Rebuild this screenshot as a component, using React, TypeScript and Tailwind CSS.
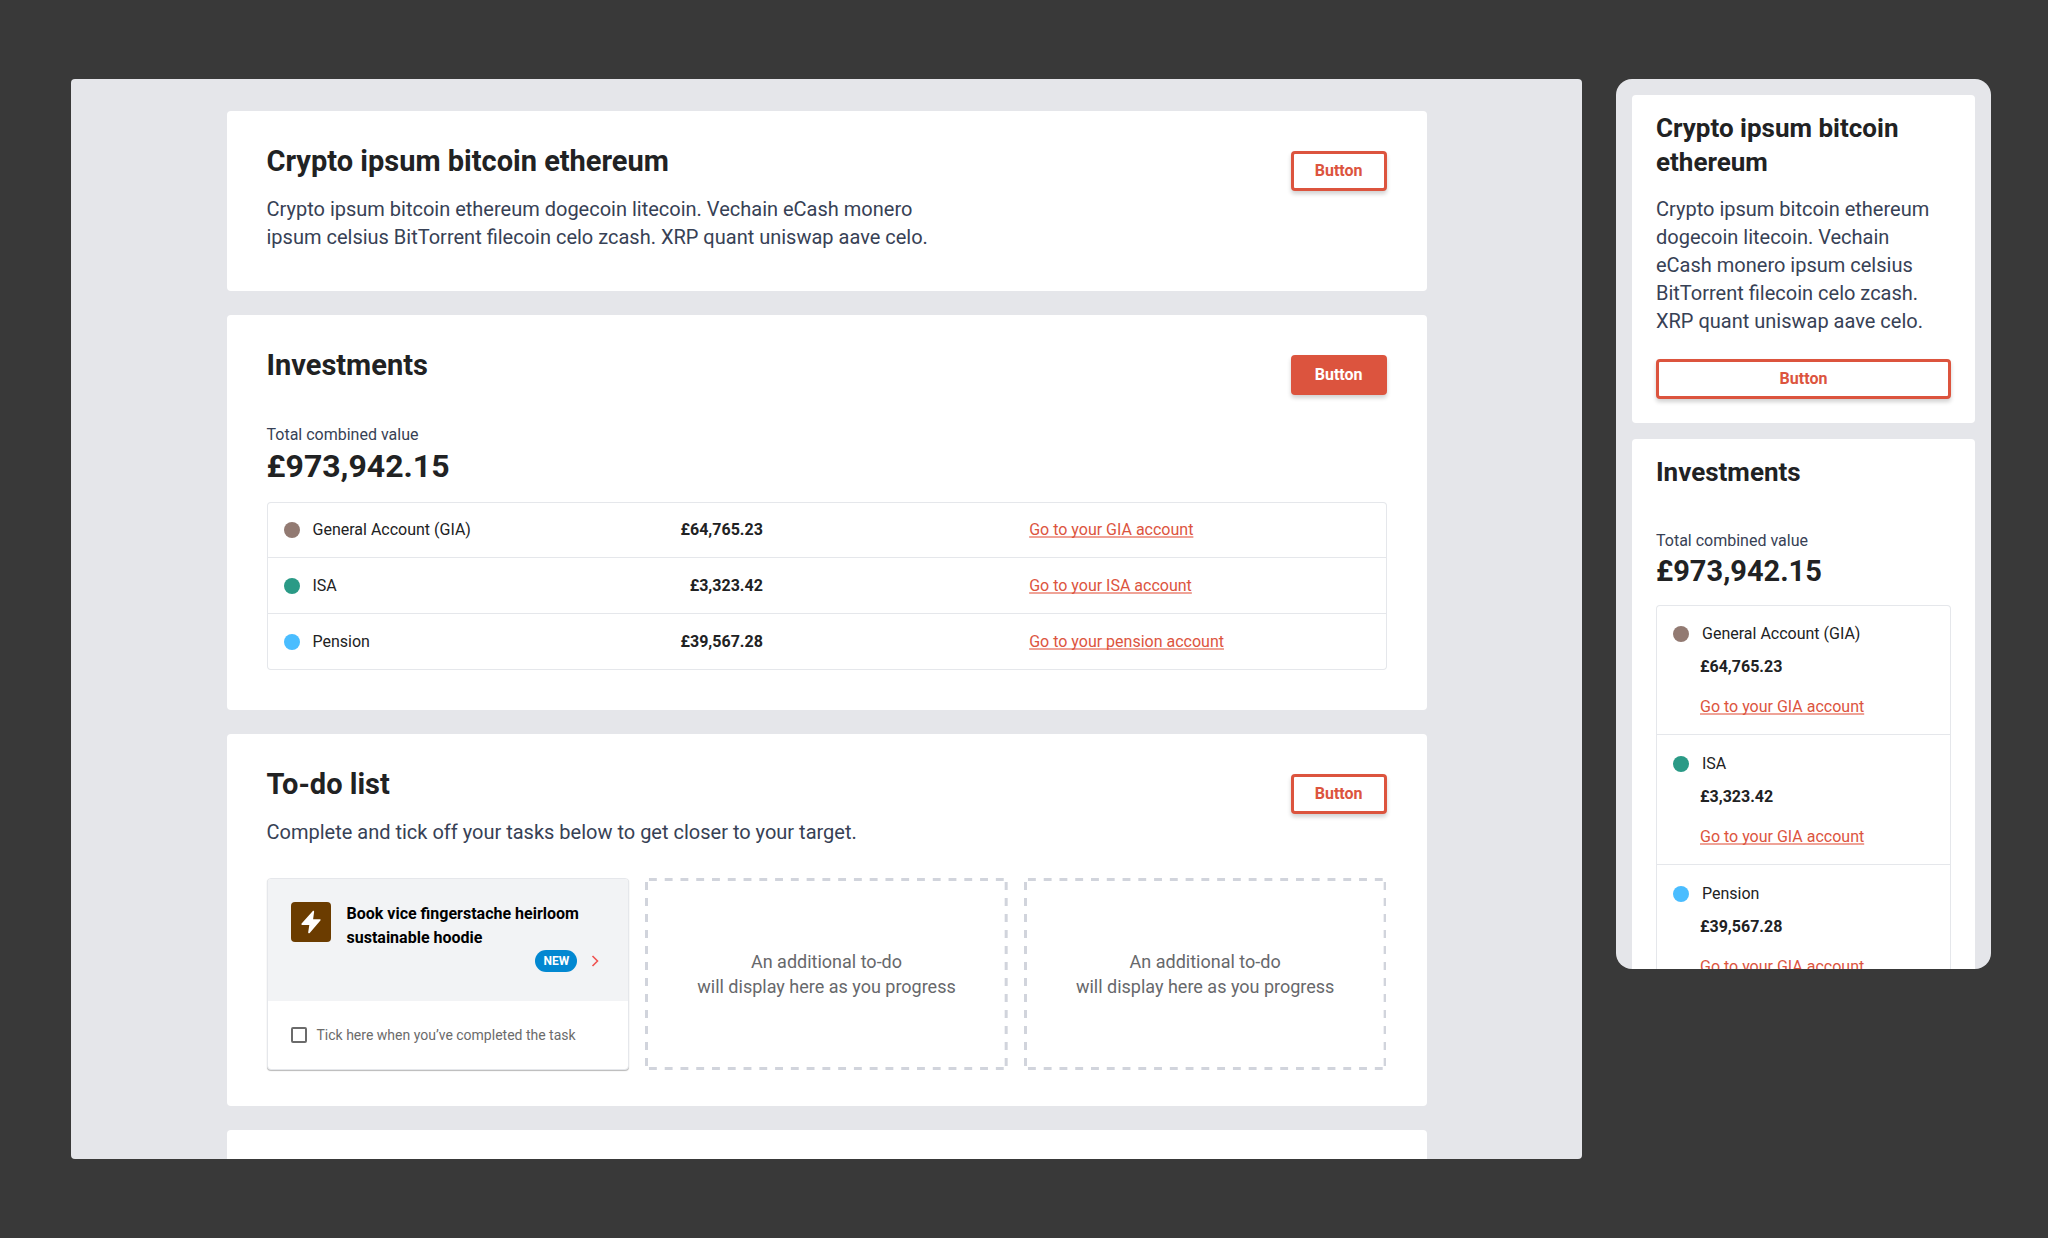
import { useId, useState } from "react";
import type { ReactNode } from "react";
import clsx from "clsx";

type Account = {
  name: string;
  amount: string;
  dot: string;
  link: string;
};

const accounts: Account[] = [
  { name: "General Account (GIA)", amount: "£64,765.23", dot: "bg-[#927a72]", link: "Go to your GIA account" },
  { name: "ISA", amount: "£3,323.42", dot: "bg-[#2a9a86]", link: "Go to your ISA account" },
  { name: "Pension", amount: "£39,567.28", dot: "bg-[#4abdff]", link: "Go to your pension account" },
];

const intro =
  "Crypto ipsum bitcoin ethereum dogecoin litecoin. Vechain eCash monero ipsum celsius BitTorrent filecoin celo zcash. XRP quant uniswap aave celo.";

function Button({ children, filled, wide }: { children: ReactNode; filled?: boolean; wide?: boolean }) {
  return (
    <button
      type="button"
      className={clsx(
        "h-10 shrink-0 rounded border-3 border-[#dc543e] px-[21px] text-base font-bold shadow-[0_3px_4px_rgba(0,0,0,0.18)]",
        filled ? "bg-[#dc543e] text-white" : "bg-white text-[#dc543e]",
        wide && "w-full",
      )}
    >
      {children}
    </button>
  );
}

function Dot({ color }: { color: string }) {
  return <span className={clsx("size-4 shrink-0 rounded-full", color)} />;
}

function AccountLink({ children }: { children: ReactNode }) {
  return (
    <a
      href="#"
      className="text-[#dc543e] underline decoration-[#efa397] decoration-2 underline-offset-1 [text-decoration-skip-ink:none]"
    >
      {children}
    </a>
  );
}

function CardHeader({ title, children, filled }: { title: string; children?: ReactNode; filled?: boolean }) {
  return (
    <div className="flex items-start justify-between gap-6">
      <div>
        <h2 className="text-[29px] leading-9 font-bold text-[#212223]">{title}</h2>
        {children && <p className="mt-4 max-w-[676px] text-xl leading-7 text-[#374155]">{children}</p>}
      </div>
      <div className="flex pt-2">
        <Button filled={filled}>Button</Button>
      </div>
    </div>
  );
}

function Bolt() {
  return (
    <svg viewBox="0 0 40 40" className="size-10 shrink-0 rounded bg-[#6b3c00]" aria-hidden="true">
      <path
        d="M21.6 9.2 10.6 21.6c-.5.6-.2 1.3.6 1.3h7.1l-1.1 7.4c-.1.9.9 1.3 1.5.6l10.7-12.4c.5-.6.2-1.3-.6-1.3h-6.7l1-7.3c.1-1-.9-1.4-1.5-.7Z"
        fill="#fff"
      />
    </svg>
  );
}

function DashedFrame() {
  const dash = { stroke: "#d1d4dc", strokeWidth: 3, strokeDasharray: "1 1", strokeDashoffset: -0.5 };
  return (
    <svg className="absolute inset-0 size-full overflow-hidden rounded" aria-hidden="true">
      <line x1="0" y1="1.5" x2="100%" y2="1.5" pathLength={46} {...dash} />
      <svg y="100%" className="overflow-visible">
        <line x1="0" y1="-1.5" x2="100%" y2="-1.5" pathLength={46} {...dash} />
      </svg>
      <line x1="1.5" y1="0" x2="1.5" y2="100%" pathLength={24} {...dash} />
      <svg x="100%" className="overflow-visible">
        <line x1="-1.5" y1="0" x2="-1.5" y2="100%" pathLength={24} {...dash} />
      </svg>
    </svg>
  );
}

function EmptyTodo() {
  return (
    <div className="relative flex min-h-48 items-center justify-center px-6 text-center text-lg leading-[25px] text-[#67686b]">
      <DashedFrame />
      <p>
        An additional to-do
        <br />
        will display here as you progress
      </p>
    </div>
  );
}

function TodoCard() {
  const id = useId();
  const [done, setDone] = useState(false);

  return (
    <article className="flex min-h-48 flex-col overflow-hidden rounded border border-[#e5e7eb] bg-white shadow-[0_1px_1px_rgba(0,0,0,0.28)]">
      <div className="min-h-[122px] bg-[#f2f3f5] px-[23px] pt-[23px]">
        <div className="flex gap-4">
          <Bolt />
          <h3 className="text-base leading-6 font-bold text-black">Book vice fingerstache heirloom sustainable hoodie</h3>
        </div>
        <div className="-mr-0.5 flex h-[22px] items-center justify-end gap-1.5">
          <span className="rounded-full bg-[#0288d1] px-2 text-xs leading-[22px] font-bold text-white">NEW</span>
          <button type="button" aria-label="Open task" className="flex">
            <svg viewBox="0 0 24 24" className="size-6" aria-hidden="true">
              <path d="m9.5 7 5 5-5 5" fill="none" stroke="#ef5350" strokeWidth="1.6" />
            </svg>
          </button>
        </div>
      </div>
      <div className="flex flex-1 items-center gap-2.5 px-[23px]">
        <input
          id={id}
          type="checkbox"
          checked={done}
          onChange={(e) => setDone(e.target.checked)}
          className="size-4 appearance-none rounded-xs border-2 border-[#6b6b6b] bg-white checked:bg-[#6b6b6b]"
        />
        <label htmlFor={id} className="text-sm text-[#6b6b6b]">
          Tick here when you’ve completed the task
        </label>
      </div>
    </article>
  );
}

function DesktopView() {
  return (
    <main className="h-full min-w-0 flex-1 overflow-hidden rounded bg-[#e5e6ea]">
      <div className="mx-auto flex max-w-[1200px] flex-col gap-6 pt-8">
        <section className="rounded bg-white px-10 pt-8 pb-10">
          <CardHeader title="Crypto ipsum bitcoin ethereum">{intro}</CardHeader>
        </section>

        <section className="rounded bg-white px-10 pt-8 pb-10">
          <CardHeader title="Investments" filled />
          <p className="mt-7 text-base leading-6 text-[#374155]">Total combined value</p>
          <p className="text-[32px] leading-[39px] font-bold text-[#212223]">£973,942.15</p>
          <div className="mt-4 rounded shadow-[inset_0_0_0_1px_#e5e7eb]">
            <table className="w-full table-fixed border-separate border-spacing-0 text-base text-[#212223]">
              <tbody className="[&>tr:not(:last-child)>td]:border-b">
                {accounts.map((a) => (
                  <tr key={a.name}>
                    <td className="h-14 border-[#e5e7eb] px-[17px]">
                      <span className="flex items-center gap-[13px]">
                        <Dot color={a.dot} />
                        {a.name}
                      </span>
                    </td>
                    <td className="border-[#e5e7eb] px-4 font-bold">
                      <span className="inline-block w-[107px] text-right">{a.amount}</span>
                    </td>
                    <td className="border-[#e5e7eb] px-4">
                      <AccountLink>{a.link}</AccountLink>
                    </td>
                  </tr>
                ))}
              </tbody>
            </table>
          </div>
        </section>

        <section className="rounded bg-white px-10 pt-8 pb-9">
          <CardHeader title="To-do list">
            Complete and tick off your tasks below to get closer to your target.
          </CardHeader>
          <div className="mt-8 grid grid-cols-3 gap-4">
            <TodoCard />
            <EmptyTodo />
            <EmptyTodo />
          </div>
        </section>

        <section className="min-h-40 rounded bg-white" />
      </div>
    </main>
  );
}

function MobileView() {
  return (
    <aside className="flex max-h-[890px] w-[375px] shrink-0 flex-col gap-4 overflow-hidden rounded-2xl bg-[#e5e6ea] p-4">
      <section className="shrink-0 rounded bg-white px-6 pt-4 pb-6">
        <h2 className="text-[26px] leading-[34px] font-bold text-[#212223]">Crypto ipsum bitcoin ethereum</h2>
        <p className="mt-4 mb-6 pr-2 text-xl leading-7 text-[#374155]">{intro}</p>
        <Button wide>Button</Button>
      </section>

      <section className="shrink-0 rounded bg-white px-6 pt-4 pb-6">
        <h2 className="text-[26px] leading-[34px] font-bold text-[#212223]">Investments</h2>
        <p className="mt-10 text-base leading-6 text-[#374155]">Total combined value</p>
        <p className="text-[29px] leading-9 font-bold text-[#212223]">£973,942.15</p>
        <ul className="mt-4 divide-y divide-[#e5e7eb] rounded text-base leading-6 text-[#212223] shadow-[inset_0_0_0_1px_#e5e7eb]">
          {accounts.map((a) => (
            <li key={a.name} className="h-[130px] px-[17px] pt-[17px]">
              <div className="flex items-center gap-[13px]">
                <Dot color={a.dot} />
                {a.name}
              </div>
              <div className="pl-[27px]">
                <p className="mt-[9px] font-bold">{a.amount}</p>
                <p className="mt-4">
                  <AccountLink>Go to your GIA account</AccountLink>
                </p>
              </div>
            </li>
          ))}
        </ul>
      </section>
    </aside>
  );
}

export default function App() {
  return (
    <div className="flex h-screen min-h-[600px] items-start gap-[34px] bg-[#393939] py-[79px] pr-[57px] pl-[71px] font-[Roboto,sans-serif]">
      <DesktopView />
      <MobileView />
    </div>
  );
}
